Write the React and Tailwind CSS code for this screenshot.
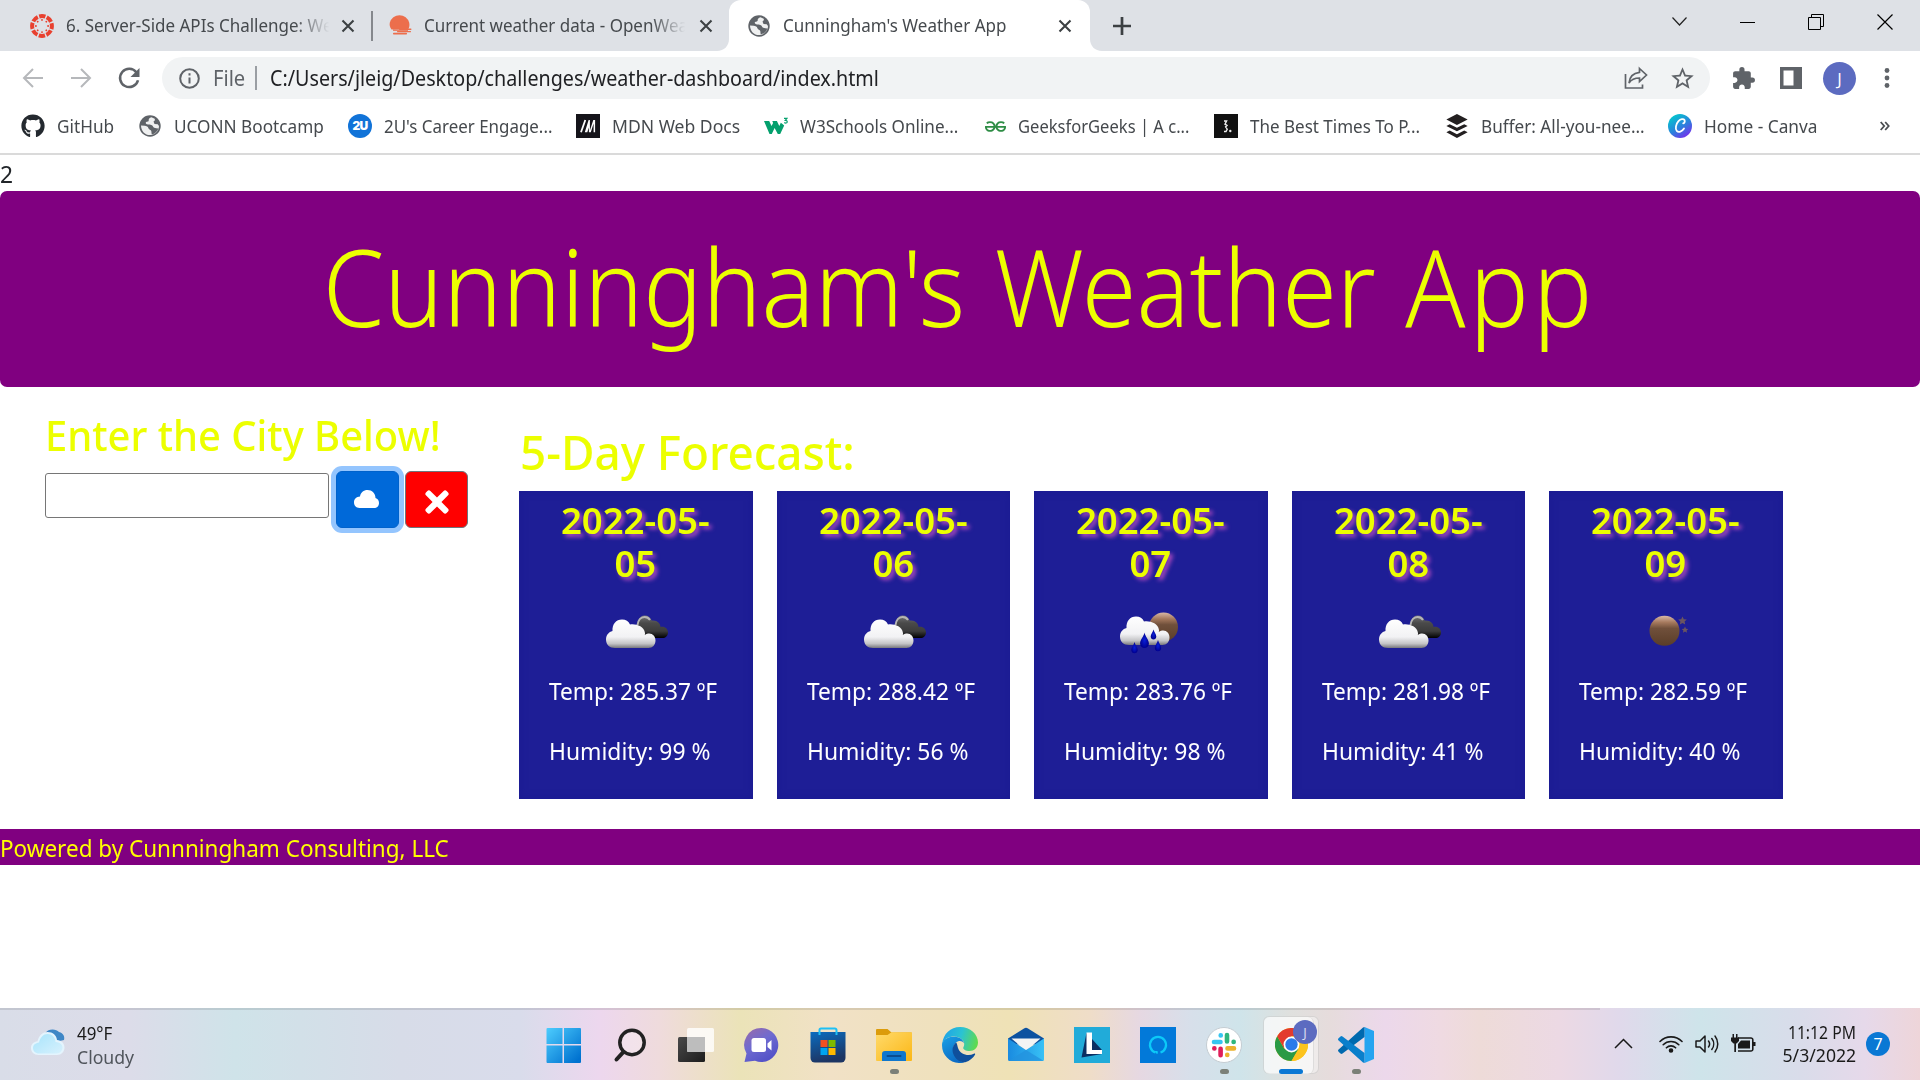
import React from "react";
import { SiGeeksforgeeks, SiBuffer } from "react-icons/si";
import { FaGithub, FaTimes } from "react-icons/fa";
import { MdExtension, MdStarBorder } from "react-icons/md";

const Txt = ({ className = "", children }) => (
  <span className={`inline-block origin-left whitespace-pre ${className}`}>{children}</span>
);

/* ---------- favicons ---------- */
const CanvasLogo = () => (
  <svg className="h-6 w-6 shrink-0" viewBox="0 0 24 24" fill="none">
    <circle cx="12" cy="12" r="9.9" stroke="#e8402f" strokeWidth="4" strokeDasharray="6.3 1.475" strokeDashoffset="3.15" />
    {[0, 45, 90, 135, 180, 225, 270, 315].map((a) => (
      <circle key={a} cx="12" cy="5.9" r="0.95" fill="#e8402f" transform={`rotate(${a} 12 12)`} />
    ))}
  </svg>
);
const OpenWeatherLogo = () => (
  <svg className="h-6 w-6 shrink-0" viewBox="0 0 24 24">
    <path d="M2.500 15.500C.8 13 .3 11 .8 8.800a10 10 0 0 1 19.400 0c.5 2.300.2 4.200-.8 6.200z" fill="#ec6e4c" />
    <rect x="10" y="14.500" width="12.500" height="1.500" rx=".7" fill="#ec6e4c" />
    <rect x="4" y="15.400" width="15" height="1.400" fill="#ec6e4c" />
    <rect x="8" y="17" width="14" height="1.300" rx=".6" fill="#ec6e4c" />
    <rect x="4" y="18.800" width="14" height="1.600" rx=".7" fill="#ec6e4c" />
  </svg>
);
const Globe = () => (
  <svg className="h-[22px] w-[22px] shrink-0" viewBox="0 0 22 22">
    <circle cx="11" cy="11" r="10.700" fill="#5f6368" />
    <path d="M12.500 2.200c-2.200.6-3 1.800-2.800 3.200.2 1-1.300 1.400-2.700 1.500-.8 1.300.2 2.400 2.200 2.500 2.200.1 4.300.3 4.800 2.200.3 1.300 2 1.300 3.200 1.700l2.200.2c-1 3-3.400 5.300-6.700 6l-.4-3.400c-.3-1.500-2.600-1-3-3-.2-1.500-1.800-2-3.600-2.300L2 10.400c.1 5.600 4 9.600 9 9.700 5-.1 9-4.200 9-9.100l-1.300-1.800-3.200-.2-1-2.600c1.200-.4 1.700-1.500 1.200-2.700z" fill="#fff" fillOpacity=".9" />
  </svg>
);
const TwoU = () => (
  <span className="flex h-6 w-6 items-center justify-center rounded-full bg-[#1173d8] font-['Inter'] text-[12px] font-black leading-none tracking-[-0.8px] text-white">2U</span>
);
const Mdn = () => (
  <svg className="h-6 w-6 shrink-0" viewBox="0 0 24 24">
    <rect width="24" height="24" fill="#15141a" />
    <path d="M5 18.200 9.300 6" stroke="#fff" strokeWidth="1.800" fill="none" />
    <path d="M8.800 18.200 12.600 6h1.300v4.500l-2.600 7.700zM12.900 6h1v12.200h-1zM13.300 18.200 17.300 6h1.800v12.200h-1.500V9.500l-2.800 8.700z" fill="#fff" />
  </svg>
);
const W3 = () => (
  <svg className="h-6 w-6 shrink-0" viewBox="0 0 24 24">
    <path d="M0 7h5.200l2.300 5 1.600-3-.8-2h4.600l2.400 5 1.500-3.300L18.500 10l1.700 1.500L16.200 20h-2.400L10.600 14l-2.800 6H5.500z" fill="#04a06d" />
    <path d="M20 4.300h3l-1.700 2c1.500 0 2.100.8 1.800 1.900-.3.900-1.800 1.200-2.800.3" stroke="#04a06d" strokeWidth="1.200" fill="none" />
  </svg>
);
const BestTimes = () => (
  <svg className="h-6 w-6 shrink-0" viewBox="0 0 24 24">
    <rect width="24" height="24" fill="#111" />
    <path d="M10 7h2.600l-1.600 3.200 2 1.200-1.400 1.500 1.600 2.300-1.200 2.300h-2" stroke="#eee" strokeWidth="1.400" fill="none" />
    <circle cx="16.300" cy="17" r="1.200" fill="#eee" />
  </svg>
);
const Canva = () => (
  <svg className="h-6 w-6 shrink-0" viewBox="0 0 24 24">
    <defs>
      <linearGradient id="canva" x1=".2" y1=".1" x2=".8" y2="1">
        <stop offset="0" stopColor="#06c2cf" /><stop offset=".5" stopColor="#2a82dc" /><stop offset="1" stopColor="#7c28ee" />
      </linearGradient>
    </defs>
    <circle cx="12" cy="12" r="12" fill="url(#canva)" />
    <path d="M15.200 9.300c1.300-.2 2-2 1.300-3.200-1-1.600-4-1.300-6 1-2.700 3-3.500 7.600-1.700 9.800 1.800 2.100 5.200.7 7.200-2.400" stroke="#fff" strokeWidth="1.800" fill="none" strokeLinecap="round" />
  </svg>
);

/* ---------- weather pictures ---------- */
const Defs = () => (
  <defs>
    <linearGradient id="white" x1="0" y1="25" x2="0" y2="54" gradientUnits="userSpaceOnUse">
      <stop offset="0" stopColor="#fff" /><stop offset=".62" stopColor="#f2f2f4" /><stop offset=".85" stopColor="#c4c4c6" /><stop offset="1" stopColor="#77777c" />
    </linearGradient>
    <linearGradient id="dark" x1="0" y1="21" x2="0" y2="44" gradientUnits="userSpaceOnUse">
      <stop offset="0" stopColor="#77777a" /><stop offset=".35" stopColor="#4a4a4a" /><stop offset=".7" stopColor="#3c3c3c" /><stop offset="1" stopColor="#000" />
    </linearGradient>
    <linearGradient id="moon" x1="0" y1="0" x2="0" y2="1">
      <stop offset="0" stopColor="#d9b8a6" /><stop offset=".22" stopColor="#a5795d" /><stop offset=".42" stopColor="#70503b" /><stop offset="1" stopColor="#5a3d28" />
    </linearGradient>
    <radialGradient id="drop"><stop offset="0" stopColor="#0a1fd8" /><stop offset="1" stopColor="#000090" /></radialGradient>
  </defs>
);
const WhiteCloud = () => (
  <path d="M17 54C11.500 54 8 50.500 8 45.500 8 41 10.800 38 14.500 37 14.200 30 18 25.500 24 25.500c4 0 6.500 1.800 8 5 5.500-1 14 1.500 15 8.500 0 .8 0 1.400-.2 2 5.500-3.500 10.700 0 10.700 5.500 0 4.500-3 7.500-7 7.500z" fill="url(#white)" />
);
const Clouds = () => (
  <svg className="h-[75px] w-[75px]" viewBox="0 0 75 75">
    <Defs />
    <path d="M40 36c-2-7.500 1-14.500 6.700-14.500 3.500 0 5.800 2 7 5 5-.8 8.800 2.500 8.800 6.500 4-1 7.500 1.500 7.500 5.500 0 3.500-2.500 5.500-5.500 5.500H46z" fill="url(#dark)" />
    <path d="M39.500 31c.6-4.800 3.400-8 7-8 2.400 0 4.300 1 5.500 3" stroke="#b5b5b5" strokeWidth="2" fill="none" />
    <WhiteCloud />
  </svg>
);
const Drop = ({ x, y, s }) => (
  <path transform={`translate(${x} ${y}) scale(${s})`} d="M0 0c.6 3.500 4 6.500 4 10 0 2.500-1.800 4.200-4 4.200S-4 12.500-4 10C-4 6.500-.6 3.500 0 0z" fill="url(#drop)" />
);
const Rain = () => (
  <svg className="h-[75px] w-[75px]" viewBox="0 0 75 75">
    <Defs />
    <circle cx="50.500" cy="33" r="14.500" fill="url(#moon)" />
    <g transform="translate(-1 -3)"><WhiteCloud /></g>
    <Drop x={31.500} y={38.500} s={1.1} />
    <Drop x={40.500} y={35.500} s={0.7} />
    <Drop x={21.500} y={48} s={0.8} />
    <Drop x={45} y={46} s={0.8} />
  </svg>
);
const Moon = () => (
  <svg className="h-[75px] w-[75px]" viewBox="0 0 75 75">
    <Defs />
    <circle cx="36.500" cy="36.800" r="15" fill="url(#moon)" />
    <path d="m54.500 22.500 1.300 2.800 3 .3-2.200 2 .6 3-2.700-1.500-2.700 1.500.6-3-2.200-2 3-.3zM57 32.500l1 2.200 2.300.2-1.700 1.600.4 2.300-2-1.200-2 1.200.4-2.300-1.700-1.600 2.300-.2z" fill="#6b5560" />
  </svg>
);

const DAYS = [
  { d: "05", Icon: Clouds, t: "285.37", h: "99" },
  { d: "06", Icon: Clouds, t: "288.42", h: "56" },
  { d: "07", Icon: Rain, t: "283.76", h: "98" },
  { d: "08", Icon: Clouds, t: "281.98", h: "41" },
  { d: "09", Icon: Moon, t: "282.59", h: "40" },
];

const BOOKMARKS = [
  { box: "w-[118px]", pad: "ml-[12px]", s: "scale-x-[0.955]", label: "GitHub", icon: <FaGithub size={24} color="#24292f" /> },
  { box: "w-[209px]", pad: "ml-[13px]", s: "scale-x-[0.955]", label: "UCONN Bootcamp", icon: <Globe /> },
  { box: "w-[228px]", pad: "ml-[12px]", s: "scale-x-[0.94]", label: "2U's Career Engage...", icon: <TwoU /> },
  { box: "w-[188px]", pad: "ml-[12px]", s: "scale-x-[0.975]", label: "MDN Web Docs", icon: <Mdn /> },
  { box: "w-[219px]", pad: "ml-[12px]", s: "scale-x-[0.95]", label: "W3Schools Online...", icon: <W3 /> },
  { box: "w-[231px]", pad: "ml-[11px]", s: "scale-x-[0.92]", label: "GeeksforGeeks | A c...", icon: <span className="flex w-6 justify-center"><SiGeeksforgeeks size={21} color="#2f8d46" /></span> },
  { box: "w-[231px]", pad: "ml-[12px]", s: "scale-x-[0.945]", label: "The Best Times To P...", icon: <BestTimes /> },
  { box: "w-[223px]", pad: "ml-[12px]", s: "scale-x-[0.953]", label: "Buffer: All-you-nee...", icon: <SiBuffer size={24} color="#231f20" /> },
  { box: "w-[212px]", pad: "ml-[12px]", s: "scale-x-[0.96]", label: "Home - Canva", icon: <Canva /> },
];

const CloseX = () => (
  <svg className="h-[14px] w-[14px] shrink-0" viewBox="0 0 14 14"><path d="M1.500 1.500l11 11M12.500 1.500l-11 11" stroke="#3c4043" strokeWidth="2.100" /></svg>
);

function TabStrip() {
  return (
    <div className="flex h-[51px] shrink-0 items-center bg-[#dee1e6] text-[18px] leading-[26px] text-[#45494d]">
      <div className="flex w-[371px] items-center pl-[30px]">
        <CanvasLogo />
        <div className="mb-[2px] ml-[12px] w-[266px] overflow-hidden [mask-image:linear-gradient(to_right,black_86%,transparent_99%)]">
          <Txt className="scale-x-[0.944]">6. Server-Side APIs Challenge: We</Txt>
        </div>
        <span className="ml-[9px]"><CloseX /></span>
      </div>
      <div className="h-[30px] w-[2px] bg-[#85888d]" />
      <div className="flex w-[356px] items-center pl-[16px]">
        <OpenWeatherLogo />
        <div className="mb-[2px] ml-[11px] w-[264px] overflow-hidden [mask-image:linear-gradient(to_right,black_86%,transparent_99%)]">
          <Txt className="scale-x-[0.944]">Current weather data - OpenWeat</Txt>
        </div>
        <span className="ml-[11px]"><CloseX /></span>
      </div>
      <div className="relative flex h-[51px] w-[361px] items-center rounded-t-[12px] bg-white pl-[19px]">
        <svg className="absolute bottom-0 -left-[12px] h-3 w-3" viewBox="0 0 12 12"><path d="M12 0v12H0C7 12 12 7 12 0z" fill="#fff" /></svg>
        <svg className="absolute bottom-0 -right-[12px] h-3 w-3" viewBox="0 0 12 12"><path d="M0 0v12h12C5 12 0 7 0 0z" fill="#fff" /></svg>
        <Globe />
        <div className="mb-[2px] ml-[13px] w-[275px]"><Txt className="scale-x-[0.945]">Cunningham's Weather App</Txt></div>
        <CloseX />
      </div>
      <svg className="ml-[23px] h-[18px] w-[18px]" viewBox="0 0 18 18"><path d="M9 0v18M0 9h18" stroke="#3c4043" strokeWidth="2.700" /></svg>
      <div className="mb-[8px] ml-auto mr-[27px] flex items-center gap-[53px]">
        <svg className="h-[9px] w-[15px]" viewBox="0 0 15 9"><path d="M.5.500l7 7.500 7-7.500" stroke="#222" strokeWidth="1.200" fill="none" /></svg>
        <svg className="h-[16px] w-[15px]" viewBox="0 0 15 16"><path d="M0 8.500h15" stroke="#000" strokeWidth="1" /></svg>
        <svg className="h-[16px] w-[16px]" viewBox="0 0 16 16" fill="none" stroke="#000" strokeWidth="1"><path d="M.5 3.500h12v12H.5zM3.500 3.500v-3h12v12h-3" /></svg>
        <svg className="h-[16px] w-[16px]" viewBox="0 0 16 16"><path d="M.5.500l15 15M15.500.500l-15 15" stroke="#000" strokeWidth="1.200" /></svg>
      </div>
    </div>
  );
}

function Toolbar() {
  return (
    <div className="flex h-[54px] shrink-0 items-center bg-white pl-[22px] text-[21px] leading-[42px]">
      <svg className="h-[22px] w-[22px]" viewBox="0 0 22 22"><path d="M21 11H2.500M11 2l-9 9 9 9" stroke="#b6b8bb" strokeWidth="2" fill="none" /></svg>
      <svg className="ml-[26px] h-[22px] w-[22px]" viewBox="0 0 22 22"><path d="M1 11h18.500M11 2l9 9-9 9" stroke="#b6b8bb" strokeWidth="2" fill="none" /></svg>
      <svg className="ml-[25px] h-[24px] w-[24px]" viewBox="0 0 24 24"><path d="M19.500 6.500A9.100 9.100 0 1 0 21 14.200" stroke="#5f6368" strokeWidth="2.500" fill="none" /><path d="M22.500 2v9h-9z" fill="#5f6368" /></svg>
      <div className="ml-[21px] flex h-[42px] w-[1548px] items-center rounded-full bg-[#f1f3f4] pl-[17px]">
        <svg className="h-[21px] w-[21px]" viewBox="0 0 21 21"><circle cx="10.500" cy="10.500" r="9.300" stroke="#5f6368" strokeWidth="2" fill="none" /><path d="M10.500 9.500v6M10.500 5.300v2.200" stroke="#5f6368" strokeWidth="2" /></svg>
        <div className="ml-[13px] w-[42px] text-[#5f6368]"><Txt className="scale-x-[0.96]">File</Txt></div>
        <div className="h-[24px] w-[2px] bg-[#9a9ea3]" />
        <div className="ml-[13px] w-[1354px] text-[#202124]"><Txt className="scale-x-[0.938]">C:/Users/jleig/Desktop/challenges/weather-dashboard/index.html</Txt></div>
        <svg className="h-[24px] w-[24px]" viewBox="0 0 24 24" fill="none" stroke="#5f6368" strokeWidth="1.700"><path d="M1.500 8v14h17v-3.500M15.500 2.500l7 6.500-7 6.500V12c-4.500 0-8 1.200-10.500 5 .5-5.500 4-10 10.500-10.700z" /></svg>
        <span className="ml-[21px]"><MdStarBorder size={27} color="#5f6368" /></span>
      </div>
      <span className="ml-[21px]"><MdExtension size={25} color="#5f6368" /></span>
      <svg className="ml-[24px] h-[22px] w-[22px]" viewBox="0 0 22 22"><path d="M0 0h22v22H0zM3.500 3.500v15h10v-15z" fill="#5f6368" fillRule="evenodd" /></svg>
      <div className="ml-[21px] flex h-[33px] w-[33px] items-center justify-center rounded-full bg-[#5c6bc0] font-['Open_Sans'] text-[17px] leading-none text-white">J</div>
      <svg className="ml-[28px] h-[24px] w-[6px]" viewBox="0 0 6 24" fill="#5f6368"><circle cx="3" cy="4.500" r="2.400" /><circle cx="3" cy="12" r="2.400" /><circle cx="3" cy="19.500" r="2.400" /></svg>
    </div>
  );
}

function Bookmarks() {
  return (
    <div className="flex h-[50px] shrink-0 items-center border-b-2 border-[#dadada] bg-white pb-[6px] pl-[21px] text-[18px] leading-[26px] text-[#45494d]">
      {BOOKMARKS.map((b) => (
        <div key={b.label} className={`flex shrink-0 items-center ${b.box}`}>
          {b.icon}
          <Txt className={`mb-px ${b.pad} ${b.s}`}>{b.label}</Txt>
        </div>
      ))}
      <svg className="h-[10px] w-[10px]" viewBox="0 0 10 10"><path d="M.7 1l3.500 4-3.500 4M5.200 1l3.500 4-3.500 4" stroke="#4a4d51" strokeWidth="1.800" fill="none" /></svg>
    </div>
  );
}

function Page() {
  return (
    <main className="flex h-[853px] shrink-0 flex-col bg-white text-[24px] leading-[36px] text-[#212529]">
      <p className="h-[36px] pt-px"><Txt className="scale-x-[0.95]">2</Txt></p>
      <header className="flex h-[196px] shrink-0 items-center justify-center rounded-[7px] bg-[#800080] pb-[6px]">
        <h1 className="scale-x-[0.925] whitespace-nowrap text-[107px] font-light leading-[130px] text-[#ecff00] [word-spacing:4px]">Cunningham's Weather <span className="tracking-[4.500px]">App</span></h1>
      </header>
      <div className="flex h-[442px] shrink-0">
        <section className="w-[519px] pl-[45px] pt-[23px]">
          <h2 className="text-[42px] font-medium leading-[50px] text-[#ecff00]"><Txt className="scale-x-[0.95]">Enter the City Below!</Txt></h2>
          <div className="mt-[11px] flex items-start">
            <div className="mt-[2px] h-[45px] w-[284px] rounded-[3px] border border-[#767676] bg-white" />
            <button className="ml-[7px] flex h-[57px] w-[63px] items-center justify-center rounded-[6px] border border-[#0062cc] bg-[#0069d9] ring-[5px] ring-[#94c5fe]">
              <svg className="mb-px mr-[2px] h-[18px] w-[25px]" viewBox="0 0 25 18"><path d="M5.500 18C2 18 0 15.500 0 12.300 0 9 2.500 6.600 6 6.500 6.600 2.600 9.600 0 13.500 0 18 0 21.500 3.500 21.500 8c2.200.6 3.500 2.500 3.500 5 0 3-2 5-5 5z" fill="#fff" /></svg>
            </button>
            <button className="ml-[6px] flex h-[57px] w-[63px] items-center justify-center rounded-[6px] border border-[#6c757d] bg-[#f00] pt-[4px]">
              <FaTimes size={34} color="#fff" />
            </button>
          </div>
        </section>
        <section className="pt-[36px]">
          <h2 className="text-[48px] font-medium leading-[58px] text-[#ecff00]"><Txt className="ml-px scale-x-[0.955]">5-Day Forecast:</Txt></h2>
          <div className="mt-[10px] flex gap-6">
            {DAYS.map(({ d, Icon, t, h }) => (
              <article key={d} className="flex h-[308px] w-[233.500px] flex-col items-center bg-[#1e1e96] pt-[8px] text-white shadow-[inset_0_0_8px_#1a1a91]">
                <h3 className="scale-x-[1.015] text-center text-[36px] font-semibold leading-[43.200px] text-[#ecff00] [text-shadow:3px_3px_4px_#b04bbf]">2022-05-<br />{d}</h3>
                <div className="mt-[9px] h-[75px]"><Icon /></div>
                <div className="mt-[4px] flex w-full flex-col gap-6 pl-[30px]">
                  <p><Txt className="scale-x-[0.945]">Temp: {t} ºF</Txt></p>
                  <p><Txt className="scale-x-[0.953]">Humidity: {h} %</Txt></p>
                </div>
              </article>
            ))}
          </div>
        </section>
      </div>
      <footer className="h-[36px] shrink-0 bg-[#800080] pt-px text-[#ffff00]"><Txt className="scale-x-[0.937]">Powered by Cunnningham Consulting, LLC</Txt></footer>
    </main>
  );
}

/* ---------- taskbar icons, 36px boxes ---------- */
const S = "h-9 w-9";
const G = ({ id, a, b, x2 = 1, y2 = 1 }) => (
  <linearGradient id={id} x1="0" y1="0" x2={x2} y2={y2}><stop offset="0" stopColor={a} /><stop offset="1" stopColor={b} /></linearGradient>
);
const WinLogo = () => (
  <svg className={S} viewBox="0 0 36 36"><defs><linearGradient id="win" x1="0" y1="0" x2="36" y2="36" gradientUnits="userSpaceOnUse"><stop offset="0" stopColor="#4fcfff" /><stop offset=".9" stopColor="#0072d0" /></linearGradient></defs>
    <path d="M.5 2a1 1 0 0 1 1-1H16.500V17H.5zM18 1H34a1 1 0 0 1 1 1V17H18zM.5 18.500h16V36h-15a1 1 0 0 1-1-1zM18 18.500h17V35a1 1 0 0 1-1 1H18z" fill="url(#win)" /></svg>
);
const SearchIcon = () => (
  <svg className={S} viewBox="0 0 36 36" fill="none" stroke="#222"><circle cx="20" cy="15.500" r="12.200" strokeWidth="3.500" fill="#fff" fillOpacity=".25" /><path d="M11.500 24.800 4.500 32.500" strokeWidth="4" strokeLinecap="round" /></svg>
);
const TaskView = () => (
  <svg className={S} viewBox="0 0 36 36"><defs><G id="tv" a="#4a4a4a" b="#1c1c1c" /></defs>
    <rect x="0" y="10" width="27" height="25" rx="1.500" fill="url(#tv)" /><rect x="9" y="1" width="27" height="24" rx="1.500" fill="#fff" fillOpacity=".8" /><path d="M9 10h18v15H10.500A1.500 1.500 0 0 1 9 23.500z" fill="#bdbdbd" /></svg>
);
const Chat = () => (
  <svg className={S} viewBox="0 0 36 36"><defs><linearGradient id="chat" x1="0" y1="0" x2=".6" y2="1"><stop offset="0" stopColor="#9a6ba8" /><stop offset=".5" stopColor="#6f6bd0" /><stop offset="1" stopColor="#5352c8" /></linearGradient></defs>
    <path d="M17.500 1a17 17 0 1 1-6.500 32.800L.5 35l2-8.500A17 17 0 0 1 17.500 1z" fill="url(#chat)" /><rect x="7.500" y="11" width="14.500" height="14" rx="2.500" fill="#fff" /><path d="M23.500 16.500 27.500 13v10.500l-4-3.500z" fill="#fff" /></svg>
);
const Store = () => (
  <svg className={S} viewBox="0 0 36 36"><defs><G id="store" a="#0a6cc0" b="#1d3563" x2={0.3} /></defs>
    <path d="M9.500 8V3a1.500 1.500 0 0 1 1.500-1.500h14A1.500 1.500 0 0 1 26.500 3v5" stroke="#1ec0f5" strokeWidth="2" fill="none" /><path d="M.5 5h35v26a4.500 4.500 0 0 1-4.500 4.500H5A4.500 4.500 0 0 1 .5 31z" fill="url(#store)" /><path d="M9.500 5v3M26.500 5v3" stroke="#1ec0f5" strokeWidth="2" />
    <path d="M10.500 13h7v7h-7z" fill="#f25022" /><path d="M18.500 13h7v7h-7z" fill="#7fba00" /><path d="M10.500 21h7v7h-7z" fill="#00a4ef" /><path d="M18.500 21h7v7h-7z" fill="#ffb900" /></svg>
);
const Folder = () => (
  <svg className={S} viewBox="0 0 36 36"><defs><G id="fold" a="#ffda6b" b="#fbb716" /></defs>
    <path d="M0 3a1 1 0 0 1 1-1h10.500l4 3.500H35a1 1 0 0 1 1 1V10H0z" fill="#dc9c0b" /><path d="M0 8h11.500l4-2.700H35a1 1 0 0 1 1 1V33a1 1 0 0 1-1 1H1a1 1 0 0 1-1-1z" fill="url(#fold)" /><path d="M6 34v-7a3 3 0 0 1 3-3h18a3 3 0 0 1 3 3v7z" fill="#1077cd" /><rect x="10.500" y="28" width="15" height="2" rx="1" fill="#0b4c8f" /></svg>
);
const Edge = () => (
  <svg className={S} viewBox="0 0 36 36"><defs>
    <linearGradient id="e1" x1="0" y1=".4" x2="1" y2=".6"><stop offset="0" stopColor="#1fa3e8" /><stop offset=".5" stopColor="#2bc3d2" /><stop offset="1" stopColor="#62db4a" /></linearGradient>
    <linearGradient id="e2" x1="0" y1="0" x2=".5" y2="1"><stop offset="0" stopColor="#1aa0e6" /><stop offset="1" stopColor="#0c6bc4" /></linearGradient></defs>
    <path d="M.3 16.500C1.200 7 8.500 0 18 0c10.500 0 18 7.500 18 15.500 0 5-3.800 8.500-8.500 8.500-3.800 0-6.300-1.500-6.300-3 0-1 1-1.500 1-4 0-3.500-4-7.500-10-7.500C6.500 9.500 2 12 .3 16.500z" fill="url(#e1)" />
    <path d="M.2 16C2.500 11.500 7 9.800 12 9.800c5 0 9.500 2.700 10 6.500-1.200-2-3-2.600-5-2.300-5 1-7.500 8-4.500 13.500 2.200 4.500 6 7.300 10 8C10 38.500-1.500 28.500.2 16z" fill="url(#e2)" />
    <path d="M14.200 15.500c-3.700 2.500-4.800 8-2.200 13 2.600 4.800 7 7.300 11.300 6.700 4.500-1.200 8-4.500 9.700-7.400.5-1-.4-1.500-1.200-1-5.800 3-13.800.4-15.800-5.800-.6-2-.6-3.800-1.800-5.500z" fill="#0f4f9c" />
  </svg>
);
const Mail = () => (
  <svg className={S} viewBox="0 0 36 36"><defs><G id="mail" a="#1a8be0" b="#38c1f5" y2={0} /></defs>
    <path d="M0 11.500 16 1.500a3.500 3.500 0 0 1 4 0l16 10v6H0z" fill="#0d52a0" /><path d="M3.500 11.500h29L18 24z" fill="#f4f4f4" /><path d="M0 11.500 18 23l18-11.500V32.500a1.500 1.500 0 0 1-1.500 1.500h-33A1.500 1.500 0 0 1 0 32.500z" fill="url(#mail)" /><path d="M18 23l17.500 10.800H1z" fill="#2392dd" fillOpacity=".75" /></svg>
);
const LApp = () => (
  <svg className={S} viewBox="0 0 36 36"><path d="M0 0h36v36H0z" fill="#21abd9" /><path d="M12.500 6 7.500 30.500 28 27V23z" fill="#0b2f63" /><path d="M12.500 5.500h5.500V23h10v4H12.500z" fill="#fff" /></svg>
);
const Alexa = () => (
  <svg className={S} viewBox="0 0 36 36"><path d="M0 0h36v36H0z" fill="#0279d9" /><path d="M15.500 25.500a8 8 0 1 1 5 0" stroke="#0cc9f8" strokeWidth="2.300" fill="none" /><path d="M14.500 24l2 2.800 1.500-.3-.5-2.500z" fill="#0cc9f8" /></svg>
);
const Slack = () => (
  <svg className={S} viewBox="0 0 36 36"><circle cx="18" cy="18" r="17.500" fill="#fff" stroke="#c4ccd2" />
    <g strokeLinecap="round" strokeWidth="4.600" fill="none">
      <path d="M8 15h6.500M14.700 8.400h.1" stroke="#36c5f0" /><path d="M21 8v6.500M27.600 14.900h.1" stroke="#2eb67d" /><path d="M28 21.400h-6.500M21.200 27.900h.1" stroke="#ecb22e" /><path d="M14.600 28.300v-6.500M8.300 21.400h.1" stroke="#e01e5a" />
    </g></svg>
);
const Chrome = () => (
  <svg className="h-[33px] w-[33px] shrink-0" viewBox="0 0 48 48"><circle cx="24" cy="24" r="24" fill="#fcc31e" />
    <path d="M24 24 13.600 30 3.200 12A24 24 0 0 0 24 48l10.400-18z" fill="#2a9a45" /><path d="M3.200 12A24 24 0 0 1 44.800 12H24L13.600 30z" fill="#e33b2e" />
    <path d="M44.800 12A24 24 0 0 1 24 48l10.400-18L24 12z" fill="#fcc31e" /><circle cx="24" cy="24" r="11.500" fill="#fff" /><circle cx="24" cy="24" r="9" fill="#2b7bea" /></svg>
);
const VsCode = () => (
  <svg className={S} viewBox="0 0 36 36"><path d="M26.500 0 36 4v28l-9.500 4z" fill="#25a4f0" /><path d="M26.500 0v10L4.500 26.500a1.600 1.600 0 0 1-2 0L.6 24.700a1.500 1.500 0 0 1 0-2.200L25 .6z" fill="#0069ae" /><path d="M26.500 36V26L4.500 9.500a1.600 1.600 0 0 0-2 0L.6 11.300a1.500 1.500 0 0 0 0 2.200L25 35.400z" fill="#0a7fcb" /></svg>
);

const APPS = [
  [WinLogo], [SearchIcon], [TaskView], [Chat], [Store], [Folder, true], [Edge], [Mail], [LApp], [Alexa], [Slack, true],
];

const Slot = ({ children, dot }) => (
  <div className="flex h-full w-[66px] shrink-0 flex-col items-center pt-[17px]">
    {children}
    {dot && <div className="mt-[6px] h-[5px] w-[9px] rounded-full bg-[#7b8078]" />}
  </div>
);

function Taskbar() {
  return (
    <div className="flex h-[72px] shrink-0 bg-[linear-gradient(90deg,#d9dde8_0px,#dcdce9_130px,#cfe3e9_235px,#d2e0e8_300px,#d7dce8_400px,#d9dceb_520px,#edd7ee_600px,#efdbdc_660px,#ebe3b8_740px,#f1e1c6_830px,#efe1bd_940px,#efe2b6_1010px,#efddc8_1090px,#e6d8e2_1140px,#d7dfea_1190px,#cfe4ea_1240px,#dfe0de_1290px,#e6dcdc_1330px,#ecd8eb_1385px,#efdae2_1440px,#eedbd8_1480px,#ecd9e4_1560px,#e0d9eb_1620px,#cee4ea_1700px,#d9dcea_1800px,#e6d9ea_1865px,#eed5d9_1920px)] text-[18px] leading-[24px] text-[#1a1a1a]">
      <div className="flex h-full w-[531px] items-start border-t-2 border-black/10 pl-[31px] pt-[11px]">
        <svg className="mt-[7px] h-[30px] w-[34px]" viewBox="0 0 34 30"><defs><G id="c1" a="#a8e4fb" b="#d7f1fd" /></defs>
          <path d="M14 6C16 .5 25 .5 28 4c4.500 1 6 5 5 8l-9 2z" fill="#3f87c6" /><path d="M7.500 27C3 27 0 24 0 20c0-4 3-6.500 6.500-6.800C8 7 12 4 16.500 4c5.500 0 9 3.500 9.500 8 4.500.3 7.500 3.500 7.500 7.500S30.500 27 26 27z" fill="#e4f4fd" /><path d="M8 25.500C4.500 25.500 2 23 2 20c0-3 2.500-5 6-5.500C9.500 9 12.500 6 16.500 6c4.500 0 8 3.500 8 8 4 .3 7 2.500 7 5.500s-2.500 6-6 6z" fill="url(#c1)" /></svg>
        <div className="ml-[12px] flex flex-col">
          <Txt className="scale-x-[0.94]">49°F</Txt>
          <Txt className="scale-x-[0.98] text-[#50555c]">Cloudy</Txt>
        </div>
      </div>
      {APPS.map(([Icon, dot], i) => (
        <div key={i} className="h-full border-t-2 border-black/10">
          <Slot dot={dot}><Icon /></Slot>
        </div>
      ))}
      <div className="flex h-full w-[66px] items-start border-t-2 border-black/10 pl-[6px] pt-[6px]">
        <div className="flex h-[58px] w-[56px] rounded-[6px] border border-black/10 bg-white/40">
          <div className="relative flex h-[57px] w-[50px] shrink-0 flex-col items-center rounded-[6px] border-r border-black/10 bg-white/50 pl-[5px] pt-[11px]">
            <Chrome />
            <div className="mr-[1px] mt-[8px] h-[5px] w-[24px] shrink-0 rounded-full bg-[#0a78d4]" />
            <div className="absolute left-[29px] top-[3px] flex h-6 w-6 items-center justify-center rounded-full bg-[#5c6bc0] font-['Open_Sans'] text-[13px] leading-none text-white/80">J</div>
          </div>
        </div>
      </div>
      <div className="h-full w-[277px] border-t-2 border-black/10"><Slot dot><VsCode /></Slot></div>
      <div className="flex h-full flex-1 items-center pl-[14px]">
        <svg className="mb-[1px] h-[11px] w-[19px]" viewBox="0 0 19 11"><path d="M1 10l8.500-8.500L18 10" stroke="#1a1a1a" strokeWidth="1.500" fill="none" /></svg>
        <svg className="ml-[26px] h-[18px] w-[24px]" viewBox="0 0 24 18" fill="none" stroke="#1a1a1a" strokeWidth="1.600" strokeLinecap="round"><path d="M1 6.500a15.500 15.500 0 0 1 22 0M4.200 9.700a11 11 0 0 1 15.600 0M7.400 12.800a6.500 6.500 0 0 1 9.200 0" /><circle cx="12" cy="15.500" r="1.500" fill="#1a1a1a" /></svg>
        <svg className="ml-[12px] h-[20px] w-[25px]" viewBox="0 0 25 20" fill="none" stroke="#1a1a1a" strokeWidth="1.500" strokeLinecap="round" strokeLinejoin="round"><path d="M1 7h4l5-5v16l-5-5H1zM13.500 7a5 5 0 0 1 0 6M16.800 4.500a9 9 0 0 1 0 11M20 2a13 13 0 0 1 0 16" /></svg>
        <svg className="mb-[2px] ml-[11px] h-[19px] w-[25px]" viewBox="0 0 25 19"><path d="M7 4h13a1.800 1.800 0 0 1 1.800 1.800v9.400A1.800 1.800 0 0 1 20 17H7" stroke="#1a1a1a" strokeWidth="1.600" fill="none" /><path d="M22 8h2.500v4H22zM10 6.500h9v8H7V10z" fill="#1a1a1a" /><path d="M0 3.500h1.500V0H3v3.500h2V0h1.500v3.500H8V7L5.500 9.500H5V18H3.300V9.500H2.500L0 7z" fill="#1a1a1a" /></svg>
        <div className="ml-[25px] flex w-[75px] flex-col leading-[23px]">
          <span className="flex justify-end"><span className="origin-right scale-x-[0.873] whitespace-pre">11:12 PM</span></span>
          <span className="flex justify-end"><span className="origin-right scale-x-[0.98] whitespace-pre">5/3/2022</span></span>
        </div>
        <div className="ml-[10px] flex h-6 w-6 items-center justify-center rounded-full bg-[#0a78d4] text-[16px] leading-none text-white">7</div>
      </div>
    </div>
  );
}

export default function App() {
  return (
    <div className="flex h-[1080px] w-[1920px] flex-col overflow-hidden bg-white font-['Noto_Sans','Open_Sans',sans-serif]">
      <TabStrip />
      <Toolbar />
      <Bookmarks />
      <Page />
      <Taskbar />
    </div>
  );
}
